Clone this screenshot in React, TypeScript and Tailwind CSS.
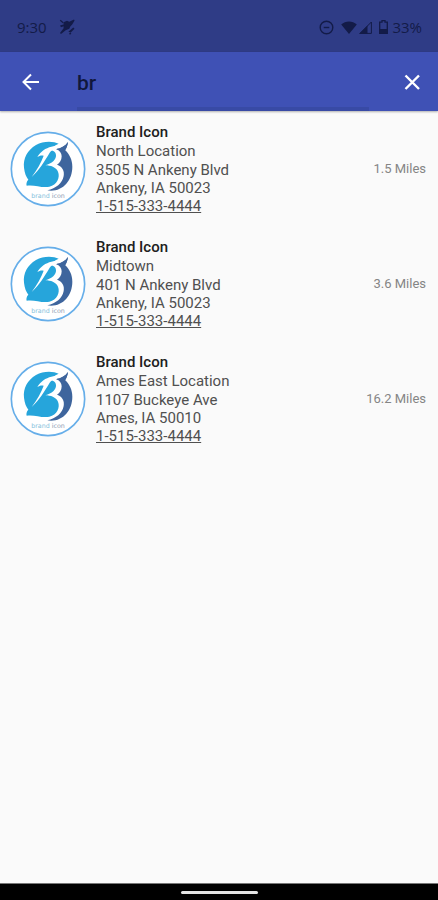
import { useState } from "react";

type Place = { id: number; name: string; branch: string; street: string; city: string; phone: string; distance: string };

const places: Place[] = [
  { id: 1, name: "Brand Icon", branch: "North Location", street: "3505 N Ankeny Blvd", city: "Ankeny, IA 50023", phone: "1-515-333-4444", distance: "1.5 Miles" },
  { id: 2, name: "Brand Icon", branch: "Midtown", street: "401 N Ankeny Blvd", city: "Ankeny, IA 50023", phone: "1-515-333-4444", distance: "3.6 Miles" },
  { id: 3, name: "Brand Icon", branch: "Ames East Location", street: "1107 Buckeye Ave", city: "Ames, IA 50010", phone: "1-515-333-4444", distance: "16.2 Miles" },
];

function StatusBar() {
  return (
    <div className="flex h-[52px] items-center justify-between bg-[#2f3c86] pl-[17px] pr-4 pt-[2px] text-[#131b48]">
      <div className="flex items-center gap-3">
        <span className="font-['Open_Sans',sans-serif] text-[15px] leading-5">9:30</span>
        <svg className="size-4" viewBox="0 0 16 16" fill="currentColor" aria-hidden="true">
          <path d="M4.500 3.200 8 1.800l2.300 1L15 .6l.6.8-2.400 4.200-1.900 1.800-1 2.400-3.600 1.400L2 15l-1-1 3.600-4.800z" />
          <path d="m.8 1.700.9-.9 3 2.600-.9.900zM1 6.500l3.500-1 .8 1.500-3.300 1.200zM9.300 12.800l5-4.300 1.200 1.200-3.700 3.800z" />
          <path d="m10 14.800 1.300-1.300 1 1-1.200 1.200z" />
        </svg>
      </div>
      <div className="flex items-center">
        <svg className="mr-[7px] size-[15px]" viewBox="0 0 15 15" fill="none" stroke="currentColor" strokeWidth="1.4" aria-hidden="true">
          <circle cx="7.500" cy="7.500" r="6.300" />
          <path d="M4.700 7.500h5.600" />
        </svg>
        <svg className="mr-[2px] h-[13px] w-4" viewBox="0 0 16 13" fill="currentColor" aria-hidden="true">
          <path d="M8 13 .2 3.400C4.600-.6 11.400-.6 15.800 3.400z" />
        </svg>
        <svg className="mr-[7px] h-[13px] w-[13px]" viewBox="0 0 13 13" aria-hidden="true">
          <path d="M1 12.400 12.400 1v11.400z" fill="none" stroke="currentColor" />
          <path d="M0 13 8.500 4.500V13z" fill="currentColor" />
        </svg>
        <svg className="mr-[4px] h-[14px] w-[9px]" viewBox="0 0 9 14" aria-hidden="true">
          <path d="M3 .6h3v1.500h2.300v11.200H.7V2.100H3z" fill="none" stroke="currentColor" strokeWidth="1.300" />
          <path d="M.7 9h7.600v4.300H.7z" fill="currentColor" />
        </svg>
        <span className="font-['Open_Sans',sans-serif] text-[15px] leading-5">33%</span>
      </div>
    </div>
  );
}

function BrandLogo() {
  return (
    <svg className="size-[76px] shrink-0" viewBox="0 0 228 228" role="img" aria-label="Brand icon">
      <circle cx="114" cy="114" r="110" fill="#fff" stroke="#66aee9" strokeWidth="5" />
      <g transform="translate(30 21)">
        {/* dark crescent behind the letter */}
        <path d="M144 12C136 24 124 31 108 34C119 37 125 45 125 55C125 67 119 75 111 80C127 86 134 98 131 114C127 136 108 151 82 157C125 164 157 130 157 86C157 65 148 48 135 36C140 29 143 21 144 12z" fill="#3e659d" />
        {/* light body with the two bowls of the letter */}
        <path d="M116 17C100 9 70 8 48 21C22 36 9 62 12 89C14 105 18 116 25 125C20 130 18 137 20 143C43 139 66 151 88 146C111 140 121 119 114 101C108 88 92 82 76 82C96 76 109 65 108 51C107 41 99 36 89 38C95 28 106 22 116 17z" fill="#26a5db" />
        {/* slanted stem and its flag */}
        <path d="M35 117C52 94 63 75 71 53C64 51 58 53 52 57C62 40 77 30 94 26C111 23 126 19 137 13L120 33C106 30 96 34 89 44C74 69 58 96 35 117z" fill="#fff" />
        <path d="M144 12C136 24 124 30 110 32L132 42C138 35 142 25 144 12z" fill="#3e659d" />
      </g>
      <text x="114" y="200" textAnchor="middle" fontFamily="DejaVu Sans, sans-serif" fontSize="19">
        <tspan fill="#86c2dc">brand</tspan>
        <tspan fill="#8f9db3" dx="6">icon</tspan>
      </text>
    </svg>
  );
}

function PlaceRow({ place }: { place: Place }) {
  return (
    <li className="flex items-center pb-[11px] pl-[10px] pr-3 pt-[10px]">
      <BrandLogo />
      <div className="ml-[10px] min-w-0 flex-1 pt-px text-[15px] text-[#505050]">
        <h2 className="font-medium leading-[19px] text-[#202020]">{place.name}</h2>
        <p className="leading-[19px]">{place.branch}</p>
        <address className="leading-[18px] not-italic">
          {place.street}
          <br />
          {place.city}
        </address>
        <a href={`tel:${place.phone}`} className="block leading-[19px] underline">{place.phone}</a>
      </div>
      <span className="text-[13px] leading-4 text-[#858585]">{place.distance}</span>
    </li>
  );
}

export default function App() {
  const [query, setQuery] = useState("br");
  const shown = places.filter((p) => p.name.toLowerCase().includes(query.toLowerCase()));
  return (
    <div className="flex min-h-screen flex-col bg-[#fafafa] font-[Roboto,sans-serif]">
      <StatusBar />
      <header className="flex h-[59px] items-center bg-[#3f51b5] pl-[19px] pr-[14px] shadow-[0_1px_2px_rgba(0,0,0,0.3)]">
        <button type="button" aria-label="Back" className="text-white">
          <svg className="size-6" viewBox="0 0 24 24" fill="none" stroke="currentColor" strokeWidth="2" aria-hidden="true">
            <path d="M20 12H5M12 4.500 4.500 12l7.500 7.500" />
          </svg>
        </button>
        <input
          type="text"
          aria-label="Search locations"
          value={query}
          onChange={(e) => setQuery(e.target.value)}
          className="ml-[34px] mr-[31px] h-full min-w-0 flex-1 border-b-4 border-[#384aa5] bg-transparent pt-[6px] text-[21px] font-medium text-[#10173c] outline-none"
        />
        <button type="button" aria-label="Clear search" onClick={() => setQuery("")} className="text-white">
          <svg className="size-6" viewBox="0 0 24 24" fill="none" stroke="currentColor" strokeWidth="2.4" aria-hidden="true">
            <path d="m5.500 5.500 13.500 13.500M19 5.500 5.500 19" />
          </svg>
        </button>
      </header>
      <main className="flex-1 pt-px">
        <ul>
          {shown.map((p) => (
            <PlaceRow key={p.id} place={p} />
          ))}
        </ul>
      </main>
      <footer className="flex h-[17px] items-center justify-center border-t border-[#777777] bg-black">
        <span className="h-[3px] w-[77px] rounded-full bg-[#e4e4e4]" />
      </footer>
    </div>
  );
}
